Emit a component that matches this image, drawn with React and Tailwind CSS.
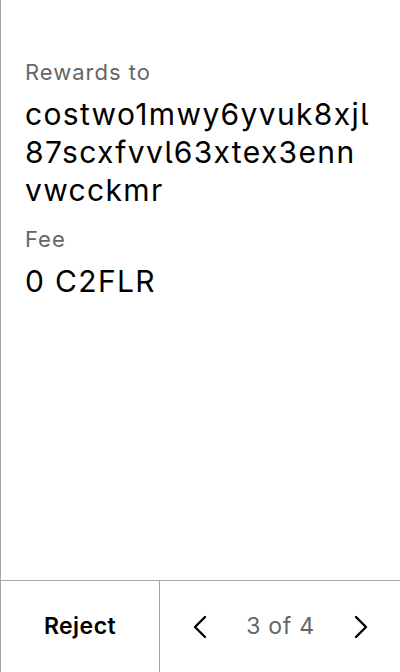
import React from "react";

const Chevron = ({ dir }) => (
  <svg width="16" height="24" viewBox="0 0 16 24" fill="none">
    <path
      d={dir === "left" ? "M13 2 L3 12 L13 22" : "M3 2 L13 12 L3 22"}
      stroke="#000"
      strokeWidth="2.4"
      strokeLinecap="round"
      strokeLinejoin="round"
    />
  </svg>
);

export default function App() {
  return (
    <div
      className="h-[672px] w-[400px] flex flex-col bg-white border-l border-[#a6a6a6] [font-feature-settings:'cv05']"
      style={{ fontFamily: "Inter, 'Noto Sans', sans-serif" }}
    >
      <div className="flex-1 pl-6 pr-2 pt-[57px]">
        <div className="text-[22px] leading-[30px] tracking-[0.045em] text-[#666]">Rewards to</div>
        <div className="text-[30px] leading-[38px] tracking-[0.045em] text-black mt-[8px] whitespace-nowrap">
          costwo1mwy6yvuk8xjl
          <br />
          87scxfvvl63xtex3enn
          <br />
          vwcckmr
        </div>
        <div className="text-[22px] leading-[30px] tracking-[0.045em] text-[#666] mt-[15px]">Fee</div>
        <div className="text-[30px] leading-[38px] tracking-[0.045em] text-black mt-[8px]">0 C2FLR</div>
      </div>
      <div className="h-[92px] border-t border-[#a6a6a6] grid grid-cols-[159px_1fr]">
        <button className="flex items-center justify-center text-[23px] tracking-[0.02em] font-semibold text-black border-r border-[#a6a6a6]">
          Reject
        </button>
        <div className="flex items-center justify-between pl-[32px] pr-[31px]">
          <Chevron dir="left" />
          <span className="text-[23px] tracking-[0.03em] text-[#666]">3 of 4</span>
          <Chevron dir="right" />
        </div>
      </div>
    </div>
  );
}
